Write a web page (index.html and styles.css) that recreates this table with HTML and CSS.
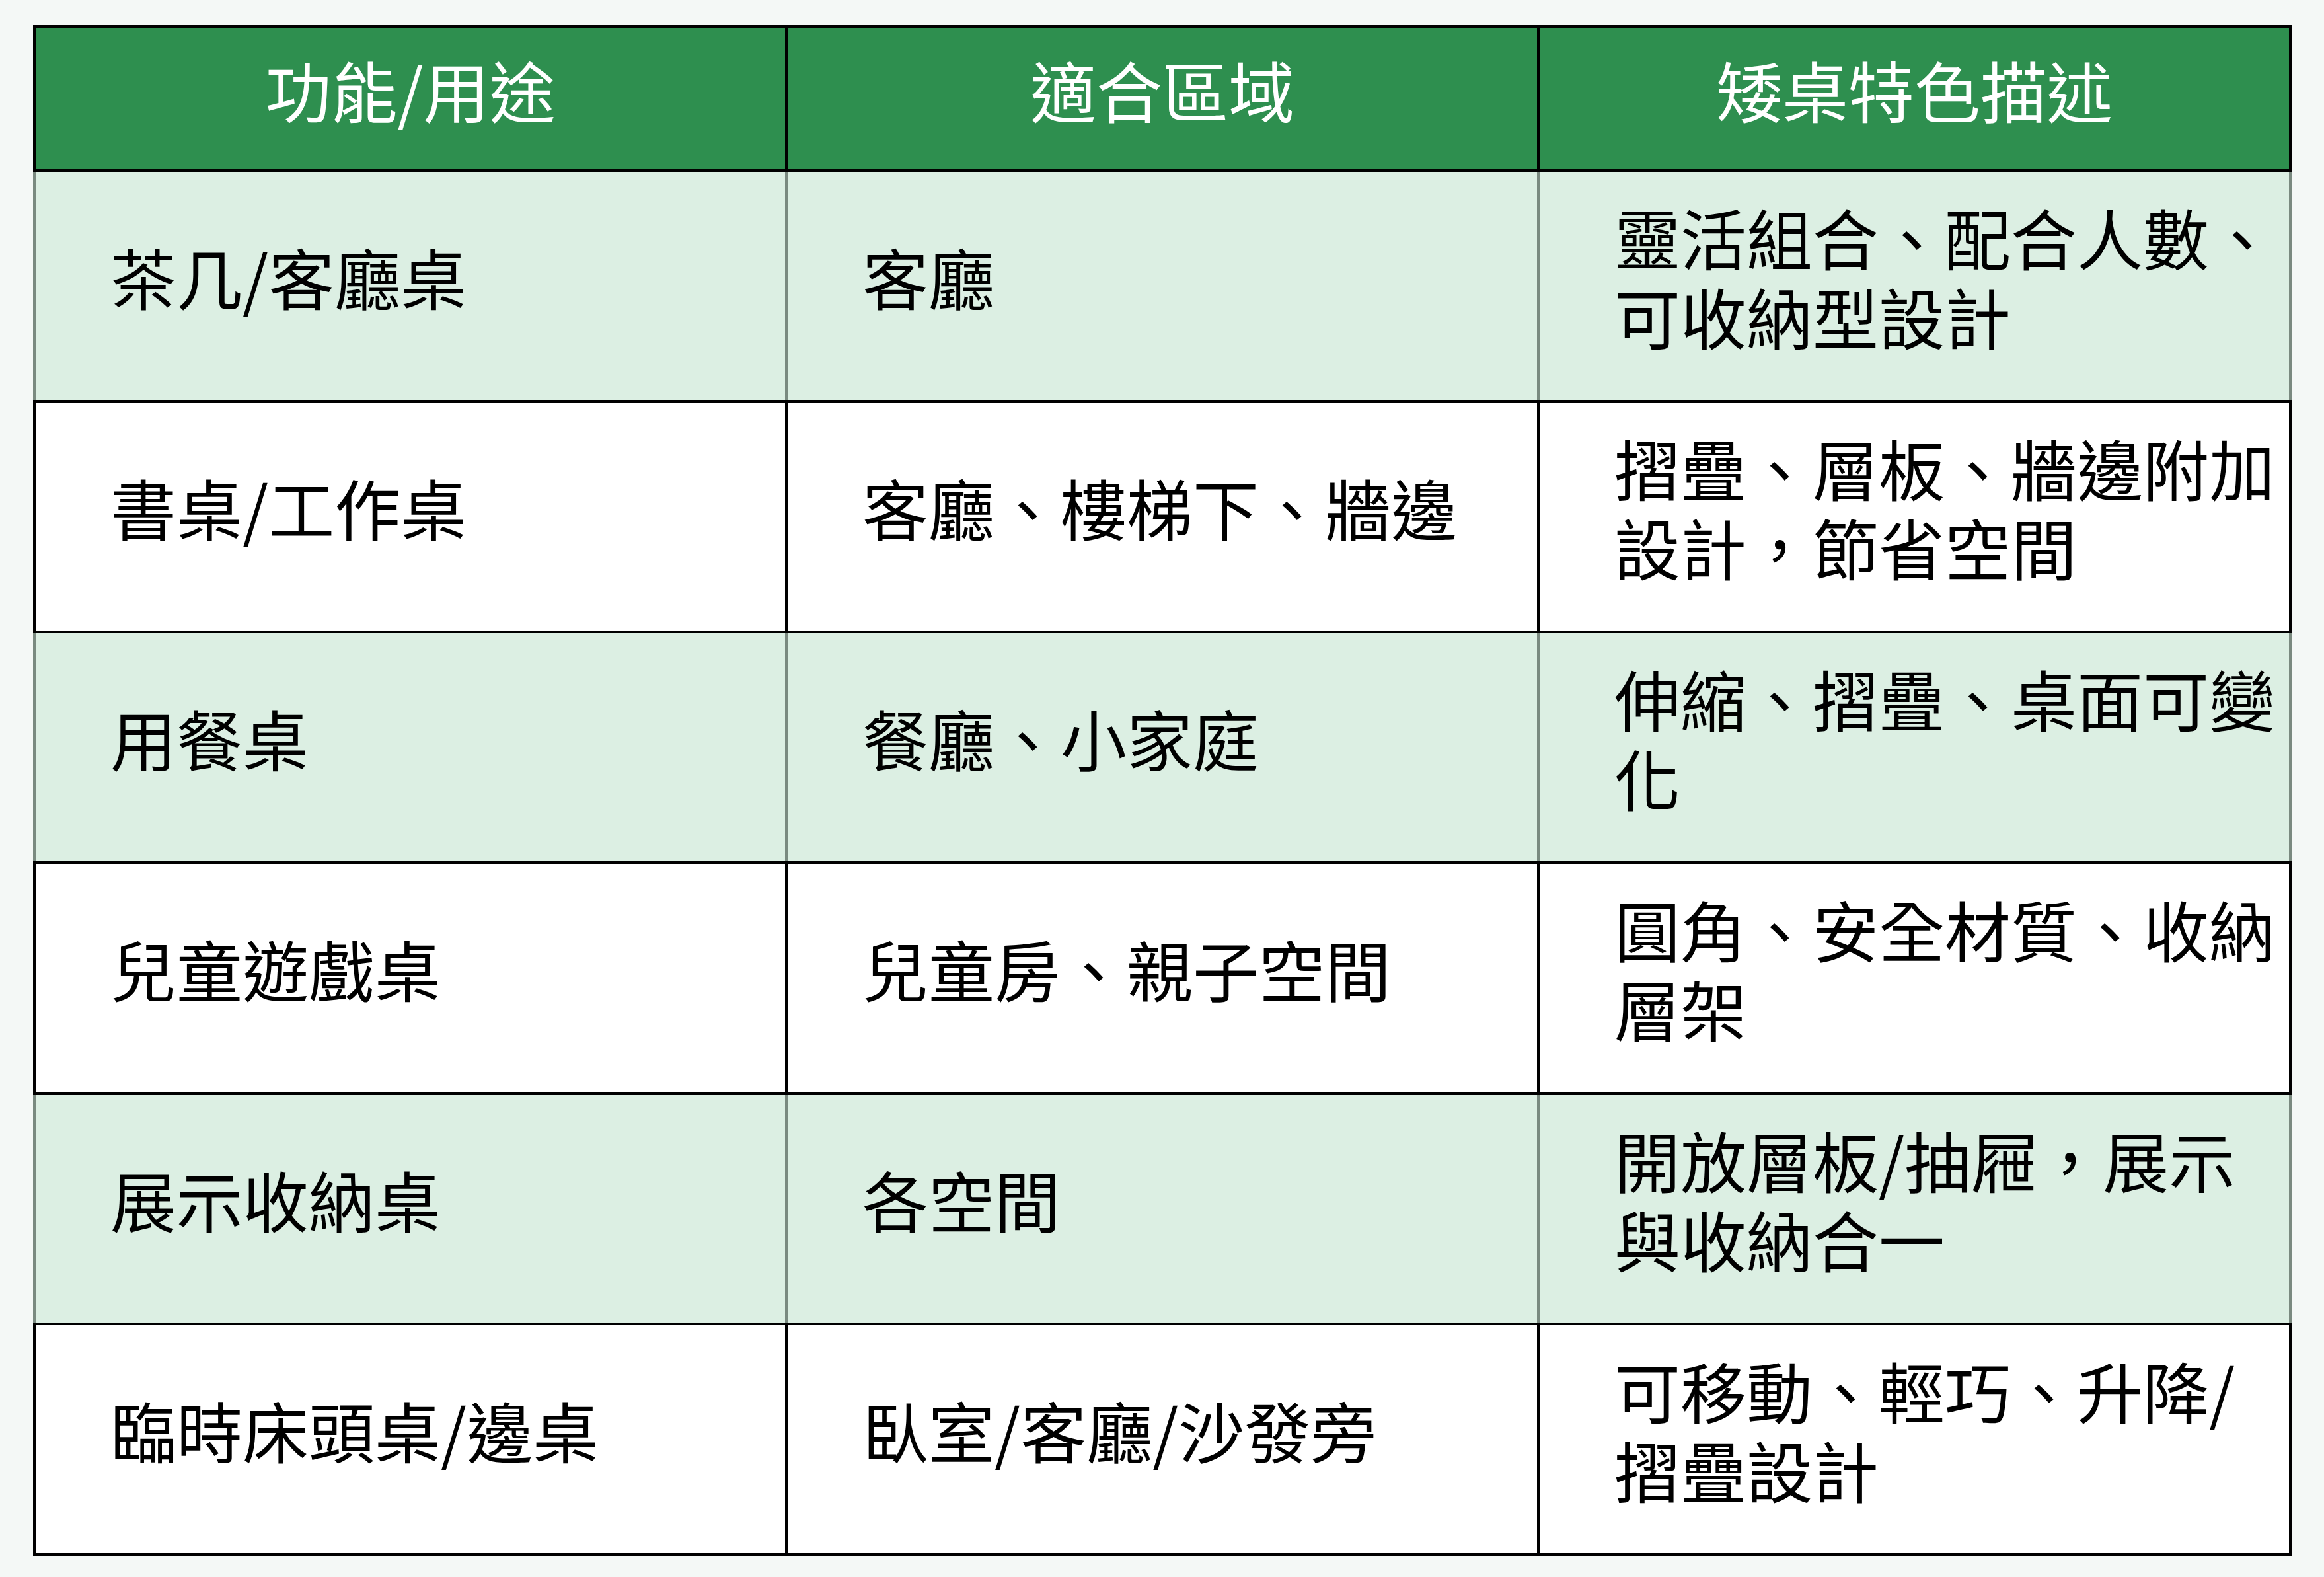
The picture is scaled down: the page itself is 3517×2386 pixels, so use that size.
FILE: index.html
```html
<!DOCTYPE html>
<html lang="zh-Hant">
<head>
<meta charset="utf-8">
<title>矮桌特色</title>
<link rel="stylesheet" href="styles.css">
</head>
<body>
<main class="page">
  <table class="desk-table">
    <colgroup>
      <col class="col">
      <col class="col">
      <col class="col">
    </colgroup>
    <thead>
      <tr>
        <th>功能/用途</th>
        <th>適合區域</th>
        <th>矮桌特色描述</th>
      </tr>
    </thead>
    <tbody>
      <tr class="tint">
        <td>茶几/客廳桌</td>
        <td>客廳</td>
        <td>靈活組合、配合人數、可收納型設計</td>
      </tr>
      <tr>
        <td>書桌/工作桌</td>
        <td>客廳、樓梯下、牆邊</td>
        <td>摺疊、層板、牆邊附加設計，節省空間</td>
      </tr>
      <tr class="tint">
        <td>用餐桌</td>
        <td>餐廳、小家庭</td>
        <td>伸縮、摺疊、桌面可變化</td>
      </tr>
      <tr>
        <td>兒童遊戲桌</td>
        <td>兒童房、親子空間</td>
        <td>圓角、安全材質、收納層架</td>
      </tr>
      <tr class="tint">
        <td>展示收納桌</td>
        <td>各空間</td>
        <td>開放層板/抽屜，展示與收納合一</td>
      </tr>
      <tr>
        <td>臨時床頭桌/邊桌</td>
        <td>臥室/客廳/沙發旁</td>
        <td>可移動、輕巧、升降/摺疊設計</td>
      </tr>
    </tbody>
  </table>
</main>
</body>
</html>
```

FILE: styles.css
```css
html, body {
  margin: 0;
  padding: 0;
  background: #f4f8f6;
}

body {
  font-family: "Noto Sans CJK TC", "Noto Sans CJK SC", "Noto Sans", sans-serif;
  color: #000;
}

.page {
  padding: 38px 0 0 50px;
}

.desk-table {
  border-collapse: collapse;
  table-layout: fixed;
  width: 3418px;
  border: 4px solid #000;
  font-size: 100px;
  line-height: 1.2;
}

.col {
  width: 33.333%;
}

.desk-table th {
  background: #2e8f4f;
  color: #fff;
  font-weight: 400;
  text-align: center;
  padding: 33px 16px 61px;
  border: 4px solid #000;
}

.desk-table td {
  background: #fff;
  text-align: left;
  vertical-align: middle;
  padding: 38px 14px 67px 113px;
  border: 4px solid #000;
}

.desk-table tr.tint td {
  background: #dcefe3;
  border-left-color: #7a8a80;
  border-right-color: #7a8a80;
}
```
